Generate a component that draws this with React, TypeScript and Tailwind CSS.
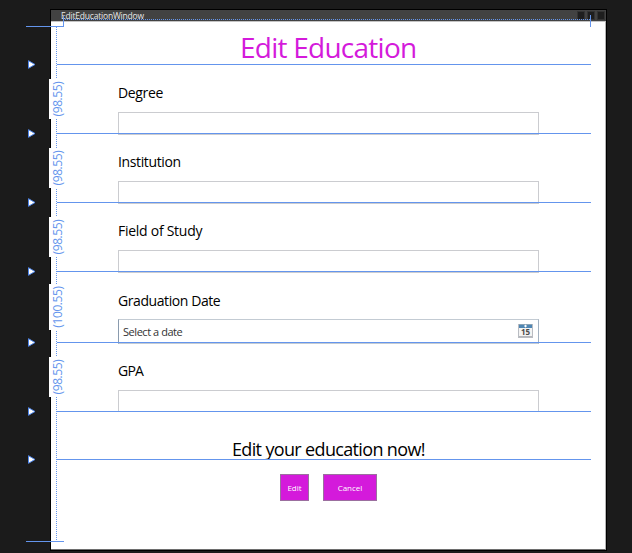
import React from "react";

type Field = {
  label: string;
  size: string;
  row: string;
  tracking: string;
  kind?: "date" | "clipped";
};

const fields: Field[] = [
  { label: "Degree", size: "(98.55)", row: "h-[69px]", tracking: "tracking-[-0.35px]" },
  { label: "Institution", size: "(98.55)", row: "h-[69px]", tracking: "tracking-[-0.37px]" },
  { label: "Field of Study", size: "(98.55)", row: "h-[69px]", tracking: "tracking-[-0.27px]" },
  { label: "Graduation Date", size: "(100.55)", row: "h-[71px]", tracking: "tracking-[-0.42px]", kind: "date" },
  { label: "GPA", size: "(98.55)", row: "h-[69px]", tracking: "tracking-[-0.8px]", kind: "clipped" },
];

/* Row boundary with the drag handle that sits in the left ruler. */
function GridLine() {
  return (
    <>
      <div className="absolute bottom-0 left-[6px] h-px w-[534px] bg-[#6495ed]" />
      <svg className="absolute -bottom-[4px] -left-[23px] h-[9px] w-[8px]" viewBox="0 0 8 9">
        <path d="M.5 .7 L7 4.5 L.5 8.3 Z" fill="#fff" stroke="#4f86ea" strokeWidth="1" />
      </svg>
    </>
  );
}

function SizeTag({ text }: { text: string }) {
  const long = text.length > 7;
  return (
    <div
      className={
        "absolute -left-[2px] z-10 flex w-[16px] items-center justify-center bg-white " +
        (long ? "top-[12px] h-[46px]" : "top-[14px] h-[40px]")
      }
    >
      <span className="relative left-px -rotate-90 whitespace-nowrap text-[12px] leading-none tracking-[-0.4px] text-[#6495ed]">
        {text}
      </span>
    </div>
  );
}

function CalendarIcon() {
  return (
    <svg className="h-[14px] w-[15px]" viewBox="0 0 15 14">
      <rect x="0.5" y="0.5" width="14" height="13" fill="#f4f4f4" stroke="#b9bcc2" />
      <rect x="1" y="0" width="13" height="4" fill="#4f86b3" />
      <rect x="1" y="0" width="13" height="1" fill="#8aa3b6" />
      <path d="M6 2h3M7.5 .8v2.6" stroke="#fff" strokeWidth="1" />
      <path d="M1 12.5h13" stroke="#b4b7bc" />
      <text x="7.5" y="11.2" textAnchor="middle" fontSize="8" fontWeight="700" fill="#4b4b4b" fontFamily="Open Sans, sans-serif">
        15
      </text>
    </svg>
  );
}

function FieldRow({ field }: { field: Field }) {
  const date = field.kind === "date";
  const clipped = field.kind === "clipped";
  return (
    <div className={"relative flex shrink-0 flex-col pl-[67px] " + field.row}>
      <div className={"text-[14px] leading-[20px] text-black " + field.tracking + (date ? " pt-[19px]" : " pt-[18px]")}>
        {field.label}
      </div>
      {date ? (
        <div className="mt-[8px] flex h-[25px] w-[421px] shrink-0 items-center justify-between border border-[#c3cbd3] border-l-[#8a9bae] border-r-[#a3b1c0] bg-white pl-[4px] pr-[5px]">
          <span className="text-[11px] leading-none tracking-[-0.45px] text-[#333]">Select a date</span>
          <span className="-mt-px flex items-center">
            <CalendarIcon />
          </span>
        </div>
      ) : (
        <div
          className={
            "mt-[9px] w-[421px] shrink-0 border border-[#cbccd0] bg-white " +
            (clipped ? "h-[22px]" : "h-[23px]")
          }
        />
      )}
      <GridLine />
      <SizeTag text={field.size} />
    </div>
  );
}

export default function App() {
  return (
    <div className="h-[553px] w-[632px] overflow-hidden bg-[#1b1b1b] pl-[50px] pt-[9px] font-['Open_Sans','Noto_Sans',sans-serif]">
      <div className="relative flex h-[542px] w-[557px] flex-col border border-black bg-white">
        <header className="flex h-[11px] shrink-0 items-center justify-between bg-[#424242] pl-[10px]">
          <span className="pt-px text-[8.5px] font-medium leading-none tracking-[-0.2px] text-[#e6e6e6]">EditEducationWindow</span>
          <div className="flex gap-[2px] pr-px">
            <i className="h-[9px] w-[8px] border border-[#333] bg-[#1e1e1e]" />
            <i className="h-[9px] w-[8px] border border-[#333] bg-[#1e1e1e]" />
            <i className="h-[9px] w-[8px] border border-[#333] bg-[#1e1e1e]" />
          </div>
        </header>
        <main className="flex flex-1 flex-col border-b border-r border-t border-b-[#6e6e6e] border-r-[#b5b5b5] border-t-[#c4c4c4]">
          <div className="relative h-[43px] shrink-0 pl-[189px]">
            <h1 className="pt-[7px] text-[28px] leading-[36px] tracking-[-0.75px] text-[#d41adb]">Edit Education</h1>
            <GridLine />
          </div>
          {fields.map((f) => (
            <FieldRow key={f.label} field={f} />
          ))}
          <div className="relative h-[48px] shrink-0 pl-[181px]">
            <p className="pt-[24px] text-[18px] leading-[26px] tracking-[-0.65px] text-black">Edit your education now!</p>
            <GridLine />
          </div>
          <div className="flex gap-[14px] pl-[229px] pt-[14px]">
            <button className="h-[27px] w-[29px] border border-[#9b6f9f] bg-[#d41adb] text-[8px] font-medium leading-none text-white">Edit</button>
            <button className="h-[27px] w-[54px] border border-[#9b6f9f] bg-[#d41adb] text-[8px] font-medium leading-none text-white">Cancel</button>
          </div>
        </main>

        {/* Margin guides drawn over the window */}
        <div className="absolute left-[12px] top-[9px] w-[527px] border-t border-dotted border-[#6495ed]" />
        <div className="absolute left-[12px] top-[6px] h-[10px] w-px bg-[#6495ed]" />
        <div className="absolute left-[539px] top-[5px] h-[12px] w-px bg-[#6495ed]" />
        <div className="absolute -left-[25px] top-[16px] h-px w-[38px] bg-[#6495ed]" />
        <div className="absolute -left-[25px] top-[531px] h-px w-[38px] bg-[#6495ed]" />
        <div className="absolute left-[5px] top-[17px] h-[514px] w-px bg-[repeating-linear-gradient(to_bottom,#6495ed_0_1px,#ffffff_1px_2px)]" />
      </div>
    </div>
  );
}
